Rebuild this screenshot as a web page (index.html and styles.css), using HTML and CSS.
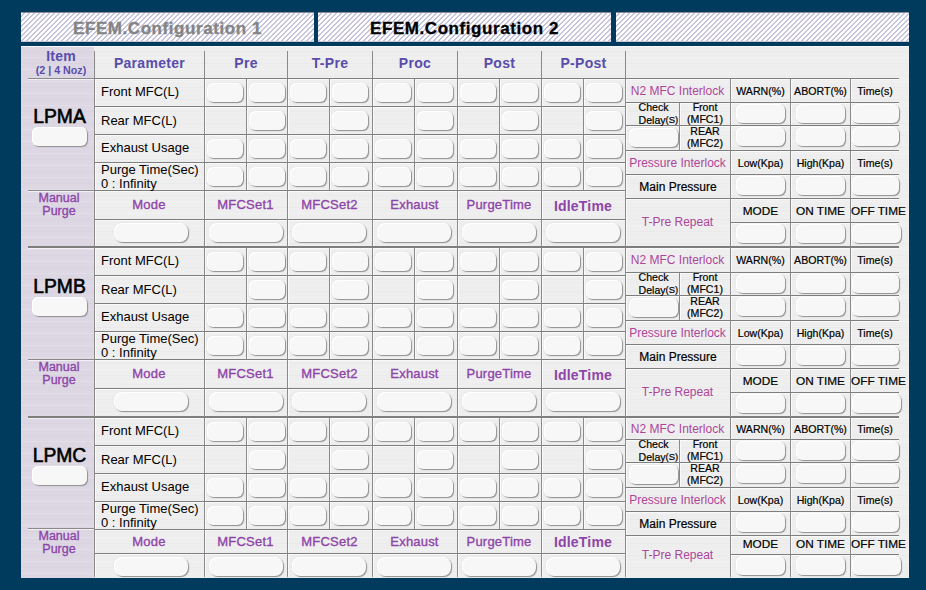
FILE: index.html
```
<!DOCTYPE html>
<html lang="en">
<head>
<meta charset="utf-8">
<title>EFEM Configuration</title>
<link rel="stylesheet" href="styles.css">
</head>
<body>
<nav class="tabs">
  <div class="tab tab-off"><span>EFEM.Configuration 1</span></div>
  <div class="tab"><span>EFEM.Configuration 2</span></div>
  <div class="tab tab-end"></div>
</nav>
<main class="panel">
  <header class="head">
    <div class="head-item"><b>Item</b><small>(2 | 4 Noz)</small></div>
    <div class="main-cols head-cols">
      <div>Parameter</div><div>Pre</div><div>T-Pre</div><div>Proc</div><div>Post</div><div>P-Post</div>
    </div>
    <div class="head-rest"></div>
  </header>
  <div id="ports"></div>
</main>
<script src="app.js"></script>
</body>
</html>
```
FILE: styles.css
```
* { box-sizing: border-box; }
body {
  margin: 0;
  padding: 12px 17px 12px 21px;
  height: 590px;
  overflow: hidden;
  background: #003a5d;
  font-family: "Liberation Sans", Arial, sans-serif;
  color: #000;
}

/* tabs */
.tabs { display: grid; grid-template-columns: 293px 293px 1fr; gap: 4px; height: 30px; margin-bottom: 4px; }
.tab {
  display: flex; align-items: center; justify-content: center;
  border-top: 1px solid #8b8d9d; border-bottom: 1px solid #c6c6d6;
  background: repeating-linear-gradient(135deg, #fff 0, #fff 1.6px, #c6c4dc 2.1px, #c6c4dc 3px, #fff 3.536px);
  font-weight: bold; font-size: 17px; letter-spacing: .57px;
}
.tab-end { margin-left: 1px; }
.tab span { padding-top: 3px; -webkit-text-stroke: .3px; }
.tab-off { color: #848484; }

/* panel */
.panel {
  height: 532px; overflow: hidden;
  background:
    linear-gradient(#f8f8f8, #f8f8f8) 0 0 / 100% 1px no-repeat,
    repeating-linear-gradient(#0000 0 5px, #00000004 5px 6px, #0000 6px 11px, #ffffff30 11px 12px),
    linear-gradient(90deg, #dcd7e3 73px, #eee 73px);
}
.head { display: grid; grid-template-columns: 74px 531px 273px; height: 33px; color: #584cac; font-weight: bold; }
.head-item {
  display: flex; flex-direction: column; align-items: center;
  margin: 5px 0 0 7px; border-bottom: 1px solid #8a8a8a; border-right: 1px solid #8a8a8a;
}
.head-item b { margin-top: -3px; font-size: 14px; line-height: 16px; letter-spacing: .2px; }
.head-item small { font-size: 10.7px; line-height: 12px; }
.main-cols { display: grid; grid-template-columns: 110px 83px 85px 85px 84px 84px; grid-template-rows: 100%; }
.head-cols { padding-top: 5px; }
.head-cols > div {
  display: flex; align-items: center; justify-content: center; padding-bottom: 4px;
  border-right: 1px solid #8a8a8a; border-bottom: 1px solid #7e7e7e; font-size: 14px; letter-spacing: .3px;
}
.head-rest { border-bottom: 1px solid #7e7e7e; }

.port { display: grid; grid-template-columns: 74px 531px 273px; }
.cell {
  display: flex; align-items: center; justify-content: center; min-width: 0; min-height: 0;
  border-right: 1px solid #8a8a8a; border-bottom: 1px solid #7e7e7e;
  box-shadow: inset 1px 1px 0 #fafafa;
  white-space: nowrap;
}
.last-row .cell { border-bottom-width: 2px; }
.port:last-child .last-row .cell { border-bottom-color: transparent; }

/* item column */
.item { display: grid; grid-template-rows: 112px 1fr; }
.port:last-child .item { grid-template-rows: 111px 1fr; }
.item-port, .item-purge {
  display: flex; flex-direction: column; align-items: center;
  margin-left: 7px; border-right: 1px solid #8a8a8a; border-bottom: 1px solid #8a8a8a;
  box-shadow: inset 0 1px 0 #f2f0f5;
}
.item-port { padding: 27px 4px 0 0; }
.port:nth-child(2) .item-port { padding-top: 28px; }
.item-port span { margin-left: 1px; font-size: 19.3px; line-height: 21px; -webkit-text-stroke: .6px #000; }
.item-purge { border-bottom: 2px solid #7e7e7e; padding: 1px 4px 0 0; font-size: 12.5px; line-height: 13px; text-align: center; }
.port:last-child .item-purge { border-bottom-color: transparent; }
.purple { color: #8e45a9; -webkit-text-stroke: .35px #8e45a9; }

/* fields */
.field {
  display: block; flex: none; height: 19px; border-radius: 6px; background: #f7f7f7;
  box-shadow: inset 1px 1px 0 #fff, 1px 1px 1px #909090, 0 0 1px #c8c8c8;
}
.w-port { width: 55px; }
.w-wide { width: 74px; border-radius: 8px; }
.w-small { width: 36px; }
.w-limit { width: 49px; }
.w-last { width: 47px; }
.w-off { width: 49px; }

/* parameter rows */
.param { font-size: 13px; line-height: 14px; justify-content: flex-start; padding: 0 0 1px 6px; white-space: pre-line; }
.main-cols:nth-child(even) > .param { padding: 1px 0 0 6px; }
.pair { display: grid; grid-template-columns: 42px 1fr; grid-template-rows: 100%; }
.pair .cell { align-items: flex-start; justify-content: flex-start; padding: 4px 0 0 2px; }
.mode { font-size: 13px; letter-spacing: .2px; padding: 0 1px 1px 0; }
.mode.strong { font-size: 14px; font-weight: bold; -webkit-text-stroke: 0; padding-top: 2px; }
.fields .cell { align-items: flex-start; justify-content: flex-start; padding: 3px 0 0 4px; }
.fields .cell:first-child { padding-left: 19px; }

/* interlock block */
.locks { display: grid; grid-template-columns: 105px 60px 60px 48px; font-size: 10.6px; }
.locks .edge { border-right: 0; }
.locks .end { border-bottom-width: 2px; }
.port:last-child .end { border-bottom-color: transparent; }
.locks .title { font-size: 12px; color: #ad459b; padding-right: 1px; }
.locks .pressure { font-size: 12px; }
.locks .time { font-size: 11.8px; }
.locks .time.edge { justify-content: flex-start; }
.port:last-child .time { padding-bottom: 3px; }
.stroke { -webkit-text-stroke: .2px #000; }
.locks .slot { justify-content: flex-start; align-items: flex-start; padding: 1px 0 0 5px; }
.locks .slot.edge { padding-left: 1px; }
.delay { grid-row: span 2; display: grid; grid-template-columns: 54px 1fr; grid-template-rows: 23px 1fr; }
.delay .cell { line-height: 12px; align-items: flex-start; text-align: center; }
.delay .cell p { margin: -1.6px 0 0; }
.delay .check { justify-content: flex-start; text-align: left; padding-left: 12.5px; line-height: 12.5px; }
.check small { font-size: 9.5px; line-height: 1; vertical-align: 1px; }
.delay .slot { padding-left: 3px; padding-top: 2px; }
.delay .low p { margin-top: -.6px; }
.title.repeat { grid-row: span 2; padding-bottom: 2px; }
```
FILE: app.js
```
const ports = [
  { name: "LPMA", rows: [28, 28, 28, 28, 29, 28], locks: [24, 23, 25, 24, 24, 24, 25] },
  { name: "LPMB", rows: [28, 28, 28, 28, 29, 29], locks: [25, 23, 25, 24, 24, 24, 25] },
  { name: "LPMC", rows: [28, 28, 28, 28, 24, 24], locks: [22, 23, 25, 24, 24, 19, 23] }
];
const params = ["Front MFC(L)", "Rear MFC(L)", "Exhaust Usage", "Purge Time(Sec)\n0 : Infinity"];
const modes = ["Mode", "MFCSet1", "MFCSet2", "Exhaust", "PurgeTime", "IdleTime"];

const field = size => `<i class="field w-${size}"></i>`;
const cell = (cls, body = "") => `<div class="cell ${cls}">${body}</div>`;
const height = px => `style="height:${px}px"`;

const paramRow = (label, i, px) => {
  const pair = `<div class="pair">${cell("", i === 1 ? "" : field("small"))}${cell("", field("small"))}</div>`;
  return `<div class="main-cols" ${height(px)}>${cell("param", label)}${pair.repeat(5)}</div>`;
};
const slots = (end = "", last = "last") =>
  cell("slot " + end, field("limit")) + cell("slot " + end, field("limit")) + cell("slot edge " + end, field(last));
const labels = (cls, a, b, c) => cell(cls, a) + cell(cls, b) + cell(cls + " edge", c);

const locks = rows => `<div class="locks" style="grid-template-rows:${rows.join("px ")}px">
  ${cell("title", "N2 MFC Interlock")}${labels("stroke", "WARN(%)", "ABORT(%)", "Time(s)")}
  <div class="delay">
    ${cell("check stroke", "<p>Check<br>Delay<small>(S)</small></p>")}${cell("stroke", "<p>Front<br>(MFC1)</p>")}
    ${cell("slot", field("limit"))}${cell("low stroke", "<p>REAR<br>(MFC2)</p>")}
  </div>
  ${slots()}${slots()}
  ${cell("title", "Pressure Interlock")}${labels("stroke", "Low(Kpa)", "High(Kpa)", "Time(s)")}
  ${cell("pressure stroke", "Main Pressure")}${slots()}
  ${cell("title repeat end", "T-Pre Repeat")}${labels("time stroke", "MODE", "ON TIME", "OFF TIME")}
  ${slots("end", "off")}
</div>`;

document.getElementById("ports").innerHTML = ports.map(p => `<section class="port">
  <div class="item">
    <div class="item-port"><span>${p.name}</span>${field("port")}</div>
    <div class="item-purge purple">Manual<br>Purge</div>
  </div>
  <div>
    ${params.map((t, i) => paramRow(t, i, p.rows[i])).join("")}
    <div class="main-cols" ${height(p.rows[4])}>${modes.map((m, i) => cell("mode purple" + (i === 5 ? " strong" : ""), m)).join("")}</div>
    <div class="main-cols fields last-row" ${height(p.rows[5])}>${cell("", field("wide")).repeat(6)}</div>
  </div>
  ${locks(p.locks)}
</section>`).join("");
```
